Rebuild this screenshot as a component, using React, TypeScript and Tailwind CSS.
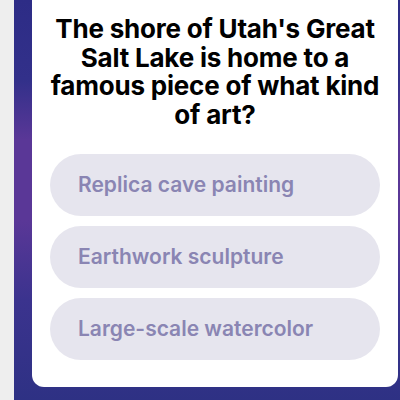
export default function App() {
  const options = ["Replica cave painting", "Earthwork sculpture", "Large-scale watercolor"];
  return (
    <div className="flex h-[400px] w-[400px] overflow-hidden bg-[#eeeeee]" style={{ fontFamily: "Inter, 'Noto Sans', sans-serif" }}>
      <div className="ml-[14px] flex w-[386px] bg-[linear-gradient(180deg,#2d2c86_0%,#32308a_20%,#5a3797_35%,#5a3797_55%,#3b338e_75%,#2e3184_100%)] pl-[18px] pb-[13px]">
        <div className="flex h-[387px] w-[366px] flex-col rounded-b-[12px] bg-white px-[14px]">
          <h1 className="mt-[15px] text-center text-[26px] font-bold leading-[28.7px] tracking-[-0.2px] text-black">
            The shore of Utah's Great Salt Lake is home to a famous piece of what kind of art?
          </h1>
          <div className="mt-[24px] flex flex-col gap-[10px] px-[4px]">
            {options.map((o) => (
              <div key={o} className="flex h-[62px] items-center rounded-full bg-[#e6e5ee] pl-[28px] text-[21px] font-semibold text-[#8a85b3]">
                {o}
              </div>
            ))}
          </div>
        </div>
      </div>
    </div>
  );
}
